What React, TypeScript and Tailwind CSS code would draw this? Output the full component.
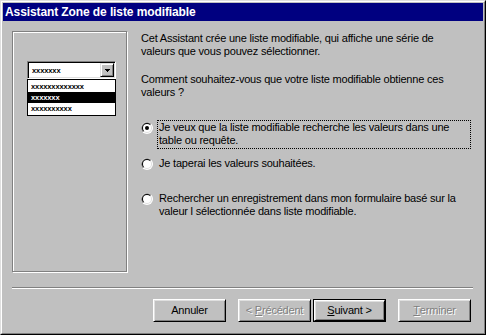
import React from 'react';

function Radio({ checked }: { checked?: boolean }) {
  return (
    <svg width="12" height="12" viewBox="0 0 12 12" className="mt-[2px] shrink-0">
      <circle cx="6" cy="6" r="6" fill="#ffffff" />
      <path d="M1.76 10.24 A6 6 0 0 1 10.24 1.76 L6 6 Z" fill="#808080" />
      <circle cx="6" cy="6" r="5" fill="#dfdfdf" />
      <path d="M2.46 9.54 A5 5 0 0 1 9.54 2.46 L6 6 Z" fill="#000000" />
      <circle cx="6" cy="6" r="4" fill="#ffffff" />
      {checked && <circle cx="6" cy="6" r="2" fill="#000000" />}
    </svg>
  );
}

function Face({ children, disabled }: { children: React.ReactNode; disabled?: boolean }) {
  return (
    <div
      className={
        disabled
          ? 'flex h-full w-full items-center justify-center whitespace-pre border border-t-white border-l-white border-r-black border-b-black shadow-[inset_1px_1px_0_#dfdfdf,inset_-1px_-1px_0_#808080] text-[#808080] [text-shadow:1px_1px_0_#ffffff]'
          : 'flex h-full w-full items-center justify-center whitespace-pre border border-t-white border-l-white border-r-black border-b-black shadow-[inset_1px_1px_0_#dfdfdf,inset_-1px_-1px_0_#808080] text-black'
      }
    >
      {children}
    </div>
  );
}

function Button({ children, disabled, primary }: { children: React.ReactNode; disabled?: boolean; primary?: boolean }) {
  if (primary) {
    return (
      <div className="h-[23px] w-[73px] border border-black">
        <Face>{children}</Face>
      </div>
    );
  }
  return (
    <div className="h-[23px] w-[73px]">
      <Face disabled={disabled}>{children}</Face>
    </div>
  );
}

export default function App() {
  return (
    <div className="h-[335px] w-[486px] border border-t-[#dfdfdf] border-l-[#dfdfdf] border-r-black border-b-black bg-[#c0c0c0] font-['Liberation_Sans',Arial,sans-serif] text-[11px] leading-[13px] tracking-[-0.2px]">
      <div className="flex h-full flex-col border border-t-white border-l-white border-r-[#808080] border-b-[#808080] p-px">
        <div className="flex h-[18px] items-center bg-[#000080] pl-[2px] text-[12px] font-bold tracking-[-0.1px] text-white">
          Assistant Zone de liste modifiable
        </div>

        <div className="flex flex-col pl-[9px] pr-[10px]">
          <div className="mt-[10px] flex">
            {/* preview panel */}
            <div className="h-[241px] w-[115px] border border-[#808080] pl-[14px] pt-[29px] shadow-[inset_1px_1px_0_#ffffff,1px_1px_0_#ffffff]">
              <div className="flex h-[18px] w-[89px] border border-t-[#808080] border-l-[#808080] border-r-white border-b-white bg-white shadow-[inset_1px_1px_0_#000000,inset_-1px_-1px_0_#dfdfdf]">
                <div className="flex flex-1 items-center pl-[4px] pt-px text-[7.5px] font-bold leading-[8px] tracking-[-0.1px]">xxxxxxx</div>
                <div className="my-px mr-px flex h-[14px] w-[14px] items-center justify-center border border-t-[#dfdfdf] border-l-[#dfdfdf] border-r-black border-b-black bg-[#c0c0c0] shadow-[inset_1px_1px_0_#ffffff,inset_-1px_-1px_0_#808080]">
                  <svg width="5" height="3" viewBox="0 0 5 3">
                    <rect x="0" y="0" width="5" height="1" fill="#000" />
                    <rect x="1" y="1" width="3" height="1" fill="#000" />
                    <rect x="2" y="2" width="1" height="1" fill="#000" />
                  </svg>
                </div>
              </div>
              <div className="flex h-[37px] w-[89px] flex-col border border-black bg-white py-px text-[7.5px] font-bold leading-[11px] tracking-[-0.1px]">
                <div className="h-[11px] pl-[3px]">xxxxxxxxxxxxx</div>
                <div className="h-[11px] bg-black pl-[3px] text-white">xxxxxxx</div>
                <div className="h-[11px] pl-[3px]">xxxxxxxxxx</div>
              </div>
            </div>

            {/* text column */}
            <div className="ml-[14px] flex flex-col whitespace-nowrap text-black">
              <p className="mt-px">
                Cet Assistant crée une liste modifiable, qui affiche une série de
                <br />
                valeurs que vous pouvez sélectionner.
              </p>
              <p className="mt-[15px]">
                Comment souhaitez-vous que votre liste modifiable obtienne ces
                <br />
                valeurs ?
              </p>

              <div className="mt-[21px] flex items-start">
                <Radio checked />
                <div className="ml-[4px] w-[314px] border border-dotted border-black pb-px pl-px">
                  Je veux que la liste modifiable recherche les valeurs dans une
                  <br />
                  table ou requête.
                </div>
              </div>

              <div className="mt-[7px] flex items-start">
                <Radio />
                <div className="ml-[4px] w-[314px] border border-transparent pb-px pl-px">
                  Je taperai les valeurs souhaitées.
                </div>
              </div>

              <div className="mt-[19px] flex items-start">
                <Radio />
                <div className="ml-[4px] w-[314px] border border-transparent pb-px pl-px">
                  Rechercher un enregistrement dans mon formulaire basé sur la
                  <br />
                  valeur l sélectionnée dans liste modifiable.
                </div>
              </div>
            </div>
          </div>

          <div className="mt-[15px] h-[2px] border-t border-b border-t-[#808080] border-b-white" />

          <div className="mr-[2px] mt-[10px] flex justify-end">
            <Button>Annuler</Button>
            <div className="ml-[12px]">
              <Button disabled>
                {'< '}
                <span className="underline">P</span>
                {'récédent'}
              </Button>
            </div>
            <div className="ml-[2px]">
              <Button primary>
                <span className="underline">S</span>
                {'uivant >'}
              </Button>
            </div>
            <div className="ml-[12px]">
              <Button disabled>
                <span className="underline">T</span>
                {'erminer'}
              </Button>
            </div>
          </div>
        </div>
      </div>
    </div>
  );
}
